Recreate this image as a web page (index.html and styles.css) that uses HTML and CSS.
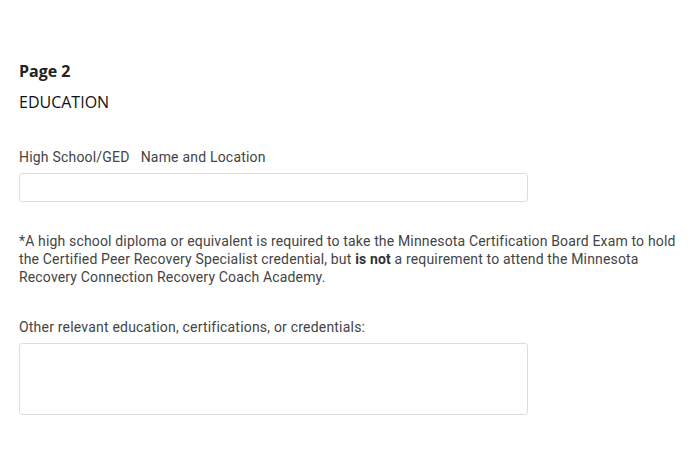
FILE: index.html
```html
<!DOCTYPE html>
<html>
<head>
<meta charset="utf-8">
<link rel="stylesheet" href="styles.css">
</head>
<body>
<main class="form">
  <h2 class="page-title">Page 2</h2>
  <h3 class="section-title">EDUCATION</h3>
  <div class="field field-first">
    <label class="field-label">High School/GED&nbsp;&nbsp; Name and Location</label>
    <input class="text-input" type="text">
  </div>
  <p class="note">*A high school diploma or equivalent is required to take the Minnesota Certification Board Exam to hold the Certified Peer Recovery Specialist credential, but <strong>is not</strong> a requirement to attend the Minnesota Recovery Connection Recovery Coach Academy.</p>
  <div class="field">
    <label class="field-label">Other relevant education, certifications, or credentials:</label>
    <textarea class="text-area"></textarea>
  </div>
</main>
</body>
</html>
```
FILE: styles.css
```css
html, body {
  margin: 0;
  padding: 0;
  background: #fff;
}
.form {
  padding: 60px 0 0 19px;
  color: #333;
}
.page-title {
  margin: 0;
  font-family: "Open Sans", sans-serif;
  font-weight: 700;
  font-size: 16px;
  line-height: 22px;
  color: #222;
}
.section-title {
  margin: 9px 0 0;
  font-family: "Open Sans", sans-serif;
  font-weight: 400;
  font-size: 16px;
  line-height: 22px;
  color: #111;
}
.field {
  display: flex;
  flex-direction: column;
  gap: 6px;
}
.field-first {
  margin-top: 34px;
}
.field-label {
  font-family: Roboto, sans-serif;
  font-size: 14px;
  letter-spacing: 0.2px;
  line-height: 20px;
  color: #444;
}
.text-input, .text-area {
  box-sizing: border-box;
  width: 509px;
  border: 1px solid #ddd;
  border-radius: 3px;
  background: #fff;
  margin: 0;
  padding: 4px 8px;
  font-family: Roboto, sans-serif;
  font-size: 14px;
}
.text-input {
  height: 29px;
}
.text-area {
  height: 72px;
  resize: none;
}
.note {
  margin: 30px 0 31px;
  font-family: Roboto, sans-serif;
  font-size: 14px;
  letter-spacing: 0.16px;
  line-height: 18px;
  color: #444;
  max-width: 664px;
}
.note strong {
  font-weight: 700;
  color: #333;
}
```
